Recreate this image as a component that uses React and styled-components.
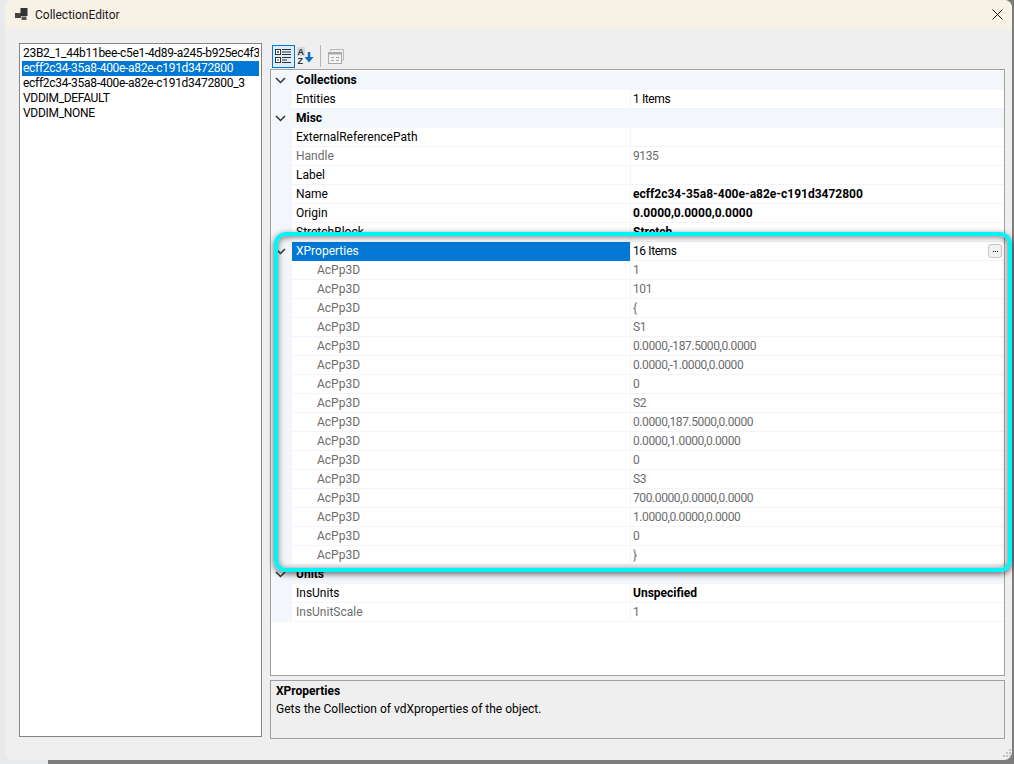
import React from 'react';
import styled, { createGlobalStyle } from 'styled-components';

const GlobalStyle = createGlobalStyle`
  html, body {
    margin: 0;
    padding: 0;
    overflow: hidden;
  }
  body {
    font-family: Roboto, "Noto Sans", "Liberation Sans", sans-serif;
    font-size: 12px;
    color: #000;
  }
`

const Desktop = styled.div`
  position: relative;
  width: 1014px;
  height: 764px;
  overflow: hidden;
  background: linear-gradient(to right, #e8e9ec 48px, #7c7c7c 48px);
`
const Window = styled.div`
  width: 1007px;
  height: 760px;
  margin-left: 5px;
  border-radius: 8px;
  overflow: hidden;
  display: flex;
  flex-direction: column;
  background-color: #efefef;
`
const TitleBar = styled.div`
  height: 29px;
  flex: none;
  display: flex;
  align-items: center;
  padding: 0 9px 0 10px;
  background-color: #f8f1e6;
`
const TitleText = styled.div`
  margin-left: 7px;
  flex: 1;
  font-size: 12px;
  color: #1a1a1a;
`
const Body = styled.div`
  flex: 1;
  display: flex;
  gap: 8px;
  padding: 14px 7px 20px 14px;
  min-height: 0;
`
const ListBox = styled.div`
  width: 243px;
  height: 694px;
  box-sizing: border-box;
  flex: none;
  padding: 2px 2px 1px;
  border: 1px solid #82858c;
  background-color: #fff;
  overflow: hidden;
`
const ListItem = styled.div`
  height: 15px;
  line-height: 15px;
  padding-left: 1px;
  white-space: nowrap;
  letter-spacing: -0.3px;
  overflow: hidden;
  color: ${p => (p.$selected ? '#fff' : '#000')};
  background-color: ${p => (p.$selected ? '#0078d4' : 'transparent')};
`
const RightColumn = styled.div`
  width: 735px;
  flex: none;
  display: flex;
  flex-direction: column;
`
const Toolbar = styled.div`
  height: 26px;
  flex: none;
  display: flex;
  align-items: center;
  padding: 0 0 0 2px;
`
const ToolButton = styled.div`
  width: ${p => p.$width || 23}px;
  height: 23px;
  box-sizing: border-box;
  display: flex;
  align-items: center;
  justify-content: center;
  border: 1px solid ${p => (p.$active ? '#0078d4' : 'transparent')};
  background-color: ${p => (p.$active ? '#dcecfa' : 'transparent')};
`
const ToolSeparator = styled.div`
  width: 1px;
  height: 22px;
  margin: 0 6px 0 3px;
  background-color: #b4b4b4;
`
const Grid = styled.div`
  height: 607px;
  flex: none;
  box-sizing: border-box;
  padding-top: 1px;
  border: 1px solid #a0a0a0;
  background-color: #fff;
  overflow: hidden;
`
const Row = styled.div`
  height: 19px;
  display: flex;
  align-items: stretch;
  line-height: 18px;
`
const Gutter = styled.div`
  width: 21px;
  flex: none;
  box-sizing: border-box;
  padding-right: 2px;
  display: flex;
  align-items: center;
  justify-content: center;
  background-color: #f3f6fb;
`
const CategoryCell = styled.div`
  flex: 1;
  padding-left: 4px;
  font-weight: 700;
  background-color: #f3f6fb;
`
const NameCell = styled.div`
  width: 338px;
  flex: none;
  box-sizing: border-box;
  padding-left: ${p => (p.$indent ? 25 : 4)}px;
  white-space: nowrap;
  border-bottom: 1px solid ${p => (p.$selected ? '#0078d4' : '#f3f4f8')};
  color: ${p => (p.$selected ? '#fff' : p.$muted ? '#6d6d6d' : '#000')};
  background-color: ${p => (p.$selected ? '#0078d4' : '#fff')};
`
const ValueCell = styled.div`
  flex: 1;
  display: flex;
  align-items: center;
  justify-content: space-between;
  box-sizing: border-box;
  padding: 0 2px 0 2px;
  border-left: 1px solid #f3f4f8;
  border-bottom: 1px solid #f3f4f8;
  font-weight: ${p => (p.$bold ? 700 : 400)};
  letter-spacing: ${p => (p.$bold ? 0 : -0.4)}px;
  color: ${p => (p.$muted ? '#6d6d6d' : '#000')};
`
const EllipsisButton = styled.div`
  width: 14px;
  height: 14px;
  box-sizing: border-box;
  display: flex;
  align-items: center;
  justify-content: center;
  gap: 1px;
  border: 1px solid #c6c6c6;
  border-radius: 3px;
  background-color: #f1f1f1;
`
const Dot = styled.span`
  width: 1px;
  height: 1px;
  background-color: #000;
`
const HelpPanel = styled.div`
  height: 59px;
  flex: none;
  box-sizing: border-box;
  margin-top: 4px;
  padding: 1px 5px;
  border: 1px solid #a0a0a0;
  line-height: 18px;
`
const HelpTitle = styled.div`
  font-weight: 700;
`
const Highlight = styled.div`
  position: absolute;
  left: 274px;
  top: 232px;
  width: 738px;
  height: 340px;
  box-sizing: border-box;
  border: 4px solid #00f5f5;
  border-radius: 12px;
  box-shadow: 0 2px 6px rgba(0, 0, 0, 0.6), inset 0 1px 6px rgba(0, 0, 0, 0.55);
  pointer-events: none;
`
const ResizeGrip = styled.svg`
  position: absolute;
  left: 1002px;
  top: 749px;
`

const Chevron = () => (
  <svg width="11" height="7" viewBox="0 0 11 7">
    <path d="M1 1 L5.5 5.5 L10 1" fill="none" stroke="#333" strokeWidth="1.5" />
  </svg>
)

const WindowIcon = () => (
  <svg width="13" height="13" viewBox="0 0 13 13">
    <rect x="0" y="5" width="6" height="5" fill="#444" />
    <rect x="5.5" y="0" width="7" height="8" fill="#333" />
    <rect x="6.5" y="8.5" width="5" height="3.5" fill="#555" />
  </svg>
)

const CloseIcon = () => (
  <svg width="11" height="11" viewBox="0 0 11 11">
    <path d="M0.5 0.5 L10.5 10.5 M10.5 0.5 L0.5 10.5" stroke="#111" strokeWidth="1" />
  </svg>
)

const CategorizedIcon = () => (
  <svg width="17" height="16" viewBox="0 0 17 16">
    <rect x="0.5" y="1.5" width="5" height="5" fill="#fff" stroke="#333" />
    <rect x="0.5" y="9.5" width="5" height="5" fill="#fff" stroke="#333" />
    <path d="M2 4 H4 M3 3 V5 M2 12 H4" stroke="#333" />
    <path d="M7 1.5 H16 M7 4 H16 M7 6.5 H16 M7 9.5 H16 M7 12 H12 M7 14.5 H16" stroke="#333" />
  </svg>
)

const AlphaIcon = () => (
  <svg width="18" height="18" viewBox="0 0 18 18">
    <rect x="0" y="0" width="8" height="9" fill="#d8d8d8" />
    <text x="0.5" y="8" fontFamily="Liberation Sans" fontSize="9" fontWeight="700" fill="#333">A</text>
    <text x="0.5" y="17" fontFamily="Liberation Sans" fontSize="9" fontWeight="700" fill="#333">Z</text>
    <path d="M12 5 V13" stroke="#0e6cc0" strokeWidth="2.5" />
    <path d="M7.5 10 L12 15.5 L16.5 10 Z" fill="#0e6cc0" />
  </svg>
)

const PagesIcon = () => (
  <svg width="16" height="15" viewBox="0 0 16 15">
    <path d="M2.5 2 V0.5 H15.5 V11 H14" fill="none" stroke="#b9b9b9" />
    <rect x="0.5" y="3.5" width="13" height="11" fill="#f4f4f4" stroke="#a9a9a9" />
    <rect x="1" y="3" width="12" height="2.5" fill="#a9a9a9" />
    <path d="M3 8.5 H6 M3 11.5 H6 M8 8.5 H11 M8 11.5 H11" stroke="#a9a9a9" />
  </svg>
)

const sections = [
  { name: 'Collections', rows: [{ name: 'Entities', value: '1 Items' }] },
  {
    name: 'Misc',
    rows: [
      { name: 'ExternalReferencePath', value: '' },
      { name: 'Handle', value: '9135', muted: true },
      { name: 'Label', value: '' },
      { name: 'Name', value: 'ecff2c34-35a8-400e-a82e-c191d3472800', bold: true },
      { name: 'Origin', value: '0.0000,0.0000,0.0000', bold: true },
      { name: 'StretchBlock', value: 'Stretch', bold: true },
      { name: 'XProperties', value: '16 Items', selected: true, expander: true },
      ...['1', '101', '{', 'S1', '0.0000,-187.5000,0.0000', '0.0000,-1.0000,0.0000', '0', 'S2',
        '0.0000,187.5000,0.0000', '0.0000,1.0000,0.0000', '0', 'S3', '700.0000,0.0000,0.0000',
        '1.0000,0.0000,0.0000', '0', '}'].map(value => ({ name: 'AcPp3D', value, muted: true, indent: true })),
    ],
  },
  {
    name: 'Units',
    rows: [
      { name: 'InsUnits', value: 'Unspecified', bold: true },
      { name: 'InsUnitScale', value: '1', muted: true },
    ],
  },
]

const listItems = [
  '23B2_1_44b11bee-c5e1-4d89-a245-b925ec4f3',
  'ecff2c34-35a8-400e-a82e-c191d3472800',
  'ecff2c34-35a8-400e-a82e-c191d3472800_3',
  'VDDIM_DEFAULT',
  'VDDIM_NONE',
]

const App = () => {
  return (
    <Desktop>
      <GlobalStyle />
      <Window>
        <TitleBar>
          <WindowIcon />
          <TitleText>CollectionEditor</TitleText>
          <CloseIcon />
        </TitleBar>
        <Body>
          <ListBox>
            {listItems.map((item, i) => (
              <ListItem key={item} $selected={i === 1}>{item}</ListItem>
            ))}
          </ListBox>
          <RightColumn>
            <Toolbar>
              <ToolButton $active><CategorizedIcon /></ToolButton>
              <ToolButton $width={22}><AlphaIcon /></ToolButton>
              <ToolSeparator />
              <ToolButton $width={18}><PagesIcon /></ToolButton>
            </Toolbar>
            <Grid>
              {sections.map(section => (
                <React.Fragment key={section.name}>
                  <Row>
                    <Gutter><Chevron /></Gutter>
                    <CategoryCell>{section.name}</CategoryCell>
                  </Row>
                  {section.rows.map((row, i) => (
                    <Row key={i}>
                      <Gutter>{row.expander && <Chevron />}</Gutter>
                      <NameCell $muted={row.muted} $indent={row.indent} $selected={row.selected}>{row.name}</NameCell>
                      <ValueCell $muted={row.muted} $bold={row.bold}>
                        {row.value}
                        {row.selected && <EllipsisButton><Dot /><Dot /><Dot /></EllipsisButton>}
                      </ValueCell>
                    </Row>
                  ))}
                </React.Fragment>
              ))}
            </Grid>
            <HelpPanel>
              <HelpTitle>XProperties</HelpTitle>
              Gets the Collection of vdXproperties of the object.
            </HelpPanel>
          </RightColumn>
        </Body>
      </Window>
      <Highlight />
      <ResizeGrip width="10" height="10" viewBox="0 0 10 10">
        <path d="M7 0h2v2H7z M4 3h2v2H4z M7 3h2v2H7z M1 6h2v2H1z M4 6h2v2H4z M7 6h2v2H7z" fill="#c4c4c4" />
      </ResizeGrip>
    </Desktop>
  )
}

export default App;
